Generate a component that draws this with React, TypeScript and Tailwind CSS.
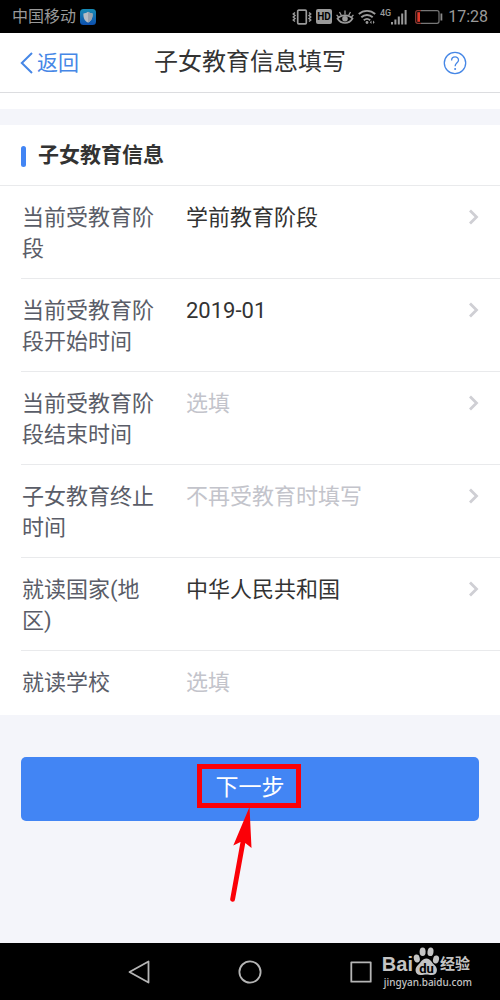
import { useState } from "react";
import type { ReactNode } from "react";

function StatusBar() {
  return (
    <div className="flex h-[33px] items-center justify-between bg-black pr-3 pl-3 text-[#9a9a9a]">
      <div className="flex items-center gap-1">
        <span className="text-[16px] leading-6">中国移动</span>
        <svg className="size-4" viewBox="0 0 16 16" aria-hidden="true">
          <defs>
            <linearGradient id="guard" x1="0" y1="0" x2="0" y2="1">
              <stop offset="0" stopColor="#168bb5" />
              <stop offset="1" stopColor="#0d4fae" />
            </linearGradient>
          </defs>
          <rect width="16" height="16" rx="3.5" fill="url(#guard)" />
          <path d="M8 2.8 C9.5 4 11 4.3 12.6 4.4 C12.8 8.800 11.500 11.800 8 13.600 C4.500 11.800 3.200 8.800 3.400 4.400 C5 4.300 6.500 4 8 2.800Z" fill="#b5bcc4" />
          <path d="M8 2.800 C9.500 4 11 4.300 12.600 4.400 C12.800 8.800 11.500 11.800 8 13.600Z" fill="#9aa3ae" />
        </svg>
      </div>
      <div className="flex items-center">
        <svg className="mr-1 h-4 w-5" viewBox="0 0 20 16" fill="none" stroke="currentColor" aria-hidden="true">
          <rect x="5.700" y="1.200" width="8.600" height="13.600" rx="1" strokeWidth="1.700" />
          <path d="M3 3.500 L1.300 5 L3 6.500 L1.300 8 L3 9.500 L1.300 11 L3 12.500 M17 3.500 L18.700 5 L17 6.500 L18.700 8 L17 9.500 L18.700 11 L17 12.500" strokeWidth="1.500" />
        </svg>
        <span className="mr-1 flex h-[15px] w-4 items-center justify-center rounded-xs bg-[#9a9a9a] text-[10px] leading-none font-bold text-black">
          HD
        </span>
        <svg className="mr-1 h-4 w-[18px]" viewBox="0 0 18 16" fill="none" stroke="currentColor" aria-hidden="true">
          <path d="M1.500 9.500 C5 5.200 13 5.200 16.500 9.500 C13 15.500 5 15.500 1.500 9.500Z" strokeWidth="1.700" />
          <circle cx="9" cy="9.800" r="2.800" fill="currentColor" stroke="none" />
          <path d="M9 5.500 V1.500 M5.300 6.300 L3.500 3 M12.700 6.300 L14.500 3 M2.500 8 L0.600 5.800 M15.500 8 L17.400 5.800" strokeWidth="1.300" />
        </svg>
        <svg className="mr-1 h-4 w-[18px]" viewBox="0 0 18 16" fill="none" stroke="currentColor" strokeWidth="1.900" aria-hidden="true">
          <path d="M0.800 5 C5.500 0.800 12.500 0.800 17.200 5 M3.300 8.300 C6.500 5.300 11.500 5.300 14.700 8.300 M5.800 11.300 C7.700 9.600 10.300 9.600 12.200 11.300" />
          <circle cx="9" cy="13.500" r="1.400" fill="currentColor" stroke="none" />
          <path d="M13.500 11.500 L11.800 13.200 L13.500 15Z M15 11.500 L16.700 13.200 L15 15Z" fill="currentColor" stroke="none" />
        </svg>
        <span className="-mt-2 text-[9px] leading-3 font-medium">4G</span>
        <svg className="mr-2 h-4 w-4" viewBox="0 0 16 16" fill="currentColor" aria-hidden="true">
          <rect x="0" y="13" width="2" height="2.500" />
          <rect x="3.400" y="10.500" width="2" height="5" />
          <rect x="6.800" y="7.500" width="2" height="8" />
          <rect x="10.200" y="4.500" width="2" height="11" />
          <rect x="13.600" y="1" width="2" height="14.500" />
        </svg>
        <svg className="mr-[5px] h-4 w-7" viewBox="0 0 28 16" fill="none" aria-hidden="true">
          <path d="M6 1.700 H2.700 Q0.700 1.700 0.700 3.700 V12.300 Q0.700 14.300 2.700 14.300 H6" stroke="#8d3b35" strokeWidth="1.200" />
          <path d="M6 1.700 H22 Q24 1.700 24 3.700 V12.300 Q24 14.300 22 14.300 H6" stroke="#777" strokeWidth="1.200" />
          <rect x="2.300" y="3.200" width="2.700" height="9.600" fill="#e03a2b" />
          <rect x="25.500" y="4.500" width="1.800" height="7" fill="#8a8a8a" />
        </svg>
        <span className="text-[16px] leading-6">17:28</span>
      </div>
    </div>
  );
}

function PageHeader() {
  return (
    <header className="grid h-[60px] grid-cols-[1fr_auto_1fr] items-center border-b border-[#dcdde0] bg-white px-5">
      <button type="button" className="flex items-center gap-1 justify-self-start text-[21px] leading-7 text-[#4687e6]">
        <svg className="h-[22px] w-[13px]" viewBox="0 0 13 22" fill="none" stroke="currentColor" strokeWidth="2" aria-hidden="true">
          <path d="M12 1 L1.800 11 L12 21" />
        </svg>
        返回
      </button>
      <h1 className="pb-[2px] text-[24px] leading-8 text-[#333]">子女教育信息填写</h1>
      <button type="button" aria-label="帮助" className="mr-[13px] justify-self-end text-[#4687e6]">
        <svg className="size-6" viewBox="0 0 24 24" fill="none" stroke="currentColor" strokeWidth="1.300" aria-hidden="true">
          <circle cx="12" cy="12" r="10.700" />
          <path d="M8.600 9.500 C8.600 4.700 15.600 4.900 15.500 9.300 C15.400 11.700 12.100 11.900 12.100 15.200" />
          <circle cx="12.100" cy="17.900" r="1" fill="currentColor" stroke="none" />
        </svg>
      </button>
    </header>
  );
}

function Chevron() {
  return (
    <svg className="mt-[7px] h-4 w-[10px] shrink-0" viewBox="0 0 10 16" fill="none" stroke="#cfcfd4" strokeWidth="2.800" aria-hidden="true">
      <path d="M1 1.500 L7.500 8 L1 14.500" />
    </svg>
  );
}

function Row({ id, label, picker = true, children }: { id: string; label: string; picker?: boolean; children: ReactNode }) {
  return (
    <div className="ml-[21px] flex items-start gap-7 border-b border-[#e9eaec] pt-4 pr-[21px] pb-[14px] last:border-b-0 last:pb-[17px]">
      <label htmlFor={id} className="w-[137px] shrink-0 pl-px text-[#5a5d68]">
        {label}
      </label>
      <div className="flex min-w-0 flex-1 items-start">
        {children}
        {picker && <Chevron />}
      </div>
    </div>
  );
}

const field =
  "h-[31px] min-w-0 flex-1 appearance-none bg-transparent p-0 text-[#333] outline-none placeholder:text-[#c3c4cb]";

function EducationForm() {
  const [start, setStart] = useState("2019-01");
  const [end, setEnd] = useState("");
  const [stop, setStop] = useState("");
  const [school, setSchool] = useState("");
  return (
    <section className="bg-white">
      <div className="flex items-center gap-3 border-b border-[#e9eaec] px-[21px] py-[14px]">
        <span className="mt-[2px] h-[21px] w-[5px] rounded-full bg-[#4285f4]" />
        <h2 className="text-[21px] leading-8 font-bold text-[#333]">子女教育信息</h2>
      </div>
      <div className="text-[22px] leading-[31px]">
        <Row id="stage" label="当前受教育阶段">
          <select id="stage" className={field}>
            <option>学前教育阶段</option>
          </select>
        </Row>
        <Row id="start" label="当前受教育阶段开始时间">
          <input id="start" className={field} value={start} onChange={(e) => setStart(e.target.value)} />
        </Row>
        <Row id="end" label="当前受教育阶段结束时间">
          <input id="end" className={field} placeholder="选填" value={end} onChange={(e) => setEnd(e.target.value)} />
        </Row>
        <Row id="stop" label="子女教育终止时间">
          <input id="stop" className={field} placeholder="不再受教育时填写" value={stop} onChange={(e) => setStop(e.target.value)} />
        </Row>
        <Row id="country" label="就读国家(地区)">
          <select id="country" className={field}>
            <option>中华人民共和国</option>
          </select>
        </Row>
        <Row id="school" label="就读学校" picker={false}>
          <input id="school" className={field} placeholder="选填" value={school} onChange={(e) => setSchool(e.target.value)} />
        </Row>
      </div>
    </section>
  );
}

function NextStep() {
  return (
    <div className="relative mx-[21px] mt-[42px] mb-[120px]">
      <button type="button" className="h-16 w-full rounded-[5px] bg-[#4285f4] pb-[2px] text-[23px] leading-8 text-white">
        下一步
      </button>
      <div className="pointer-events-none absolute top-[7px] left-1/2 -ml-[53px] h-[44px] w-[104px] border-[5px] border-[#fb0007]" />
      <svg className="pointer-events-none absolute top-[50px] left-1/2 -ml-5 h-[96px] w-10" viewBox="0 0 40 96" aria-hidden="true">
        <path d="M19.500 0 L21.500 41 L15.300 36 L5 92.500 A2.400 2.400 0 0 1 0.200 92 L10.500 35 L3.300 38.500Z" fill="#fb0007" />
      </svg>
    </div>
  );
}

function Watermark() {
  return (
    <div className="absolute top-1 right-7 text-[#c4c4c4]">
      <div className="flex items-end justify-end pr-[2px]">
        <span className="font-['Liberation_Sans'] text-[20px] leading-6 font-bold">Bai</span>
        <span className="relative h-[29px] w-[27px]">
          <svg className="size-full" viewBox="0 0 27 29" fill="currentColor" aria-hidden="true">
            <ellipse cx="3.800" cy="11.500" rx="3" ry="4" transform="rotate(-12 3.800 11.500)" />
            <ellipse cx="9.600" cy="4.800" rx="3" ry="4.300" />
            <ellipse cx="17.500" cy="4.800" rx="3" ry="4.300" transform="rotate(8 17.500 4.800)" />
            <ellipse cx="23" cy="12.500" rx="3" ry="4" transform="rotate(12 23 12.500)" />
            <path d="M13.500 11.500 C17.500 11.500 18.500 15.500 21.500 18 C25.500 21.500 24.500 28 19 28 C16.500 28 15.500 27.500 13.500 27.500 C11.500 27.500 10 28 7.500 28 C2 28 1 21.500 5 18 C8 15.500 9 11.500 13.500 11.500Z" />
          </svg>
          <span className="absolute inset-x-0 bottom-0 text-center text-[13px] leading-[15px] font-bold text-black">du</span>
        </span>
        <span className="text-[15px] leading-6 font-bold">经验</span>
      </div>
      <div className="text-right font-['Noto_Sans'] text-[10px] leading-3 font-medium">jingyan.baidu.com</div>
    </div>
  );
}

function NavigationBar() {
  return (
    <nav className="relative mt-auto flex h-[57px] items-center justify-center gap-[87px] bg-black text-[#b5b5b5]">
      <button type="button" aria-label="后退">
        <svg className="size-6" viewBox="0 0 24 24" fill="none" stroke="currentColor" strokeWidth="1.800" strokeLinejoin="round" aria-hidden="true">
          <path d="M21.500 1.500 V22.500 L2.500 12Z" />
        </svg>
      </button>
      <button type="button" aria-label="主屏幕">
        <svg className="size-6" viewBox="0 0 24 24" fill="none" stroke="currentColor" strokeWidth="1.800" aria-hidden="true">
          <circle cx="12" cy="12" r="10.600" />
        </svg>
      </button>
      <button type="button" aria-label="最近任务">
        <svg className="size-6" viewBox="0 0 24 24" fill="none" stroke="currentColor" strokeWidth="1.800" strokeLinejoin="round" aria-hidden="true">
          <rect x="2.300" y="2.300" width="19.400" height="19.400" />
        </svg>
      </button>
      <Watermark />
    </nav>
  );
}

export default function App() {
  return (
    <div className="flex min-h-screen flex-col bg-[#f4f5fa] font-[Roboto,'Noto_Sans_CJK_SC',sans-serif]">
      <StatusBar />
      <PageHeader />
      <div className="mb-4 h-4 bg-white" />
      <main>
        <EducationForm />
        <NextStep />
      </main>
      <NavigationBar />
    </div>
  );
}
